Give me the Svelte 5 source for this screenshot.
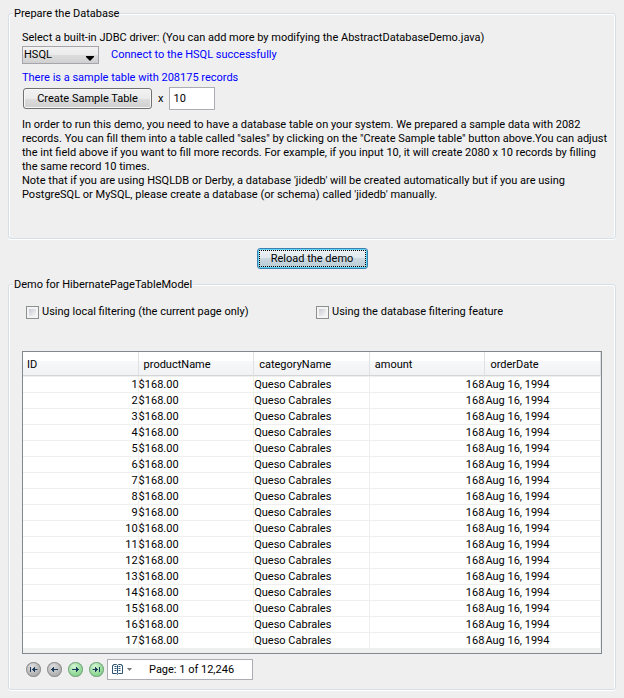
<script lang="ts">
  type SalesRecord = {
    id: number;
    productName: string;
    categoryName: string;
    amount: number;
    orderDate: string;
  };

  const PAGE_SIZE = 17;
  const PAGE_COUNT = 12246;

  const COLUMNS = ["ID", "productName", "categoryName", "amount", "orderDate"];

  let driver = $state("HSQL");
  let factor = $state("10");
  let localFilter = $state(false);
  let databaseFilter = $state(false);
  let page = $state(1);

  // Every sample record is the same one, only the id grows.
  const records: SalesRecord[] = $derived(
    Array.from({ length: PAGE_SIZE }, (_, i) => ({
      id: (page - 1) * PAGE_SIZE + i + 1,
      productName: "$168.00",
      categoryName: "Queso Cabrales",
      amount: 168,
      orderDate: "Aug 16, 1994",
    })),
  );

  const navButtons = $derived([
    { label: "First page", icon: "M4.5 5v5 M6 7.5h5.5 M8.5 5v5 M7.5 6v3", target: 1, disabled: page === 1 },
    { label: "Previous page", icon: "M4 7.5h7 M6.5 5v5 M5.5 6v3", target: page - 1, disabled: page === 1 },
    { label: "Next page", icon: "M4 7.5h7 M8.5 5v5 M9.5 6v3", target: page + 1, disabled: page === PAGE_COUNT },
    { label: "Last page", icon: "M10.5 5v5 M3.5 7.5H9 M6.5 5v5 M7.5 6v3", target: PAGE_COUNT, disabled: page === PAGE_COUNT },
  ]);
</script>

<main>
  <fieldset class="prepare">
    <legend>Prepare the Database</legend>
    <label for="driver">Select a built-in JDBC driver: (You can add more by modifying the AbstractDatabaseDemo.java)</label>
    <div class="driver-row">
      <span class="select-wrap">
        <select id="driver" bind:value={driver}>
          <option>HSQL</option>
          <option>Derby</option>
          <option>PostgreSQL</option>
          <option>MySQL</option>
        </select>
        <svg class="arrow" width="8" height="5" viewBox="0 0 8 5" aria-hidden="true"><path d="M0 0h8v1L4 5L0 1z" /></svg>
      </span>
      <span class="status">Connect to the HSQL successfully</span>
    </div>
    <p class="status">There is a sample table with 208175 records</p>
    <div class="create-row">
      <button type="button" class="push">Create Sample Table</button>
      <label for="factor">x</label>
      <input id="factor" type="text" bind:value={factor} />
    </div>
    <p>
      In order to run this demo, you need to have a database table on your system. We prepared a sample data with 2082<br />
      records. You can fill them into a table called "sales" by clicking on the "Create Sample table" button above.You can adjust<br />
      the int field above if you want to fill more records. For example, if you input 10, it will create 2080 x 10 records by filling<br />
      the same record 10 times.<br />
      Note that if you are using HSQLDB or Derby, a database 'jidedb' will be created automatically but if you are using<br />
      PostgreSQL or MySQL, please create a database (or schema) called 'jidedb' manually.
    </p>
  </fieldset>

  <div class="reload-row">
    <button type="button" class="push focused"><span>Reload the demo</span></button>
  </div>

  <fieldset class="demo">
    <legend>Demo for HibernatePageTableModel</legend>
    <div class="filters">
      <label><input type="checkbox" bind:checked={localFilter} />Using local filtering (the current page only)</label>
      <label><input type="checkbox" bind:checked={databaseFilter} />Using the database filtering feature</label>
    </div>

    <div class="table-pane">
      <table>
        <thead>
          <tr>
            {#each COLUMNS as column (column)}
              <th scope="col">{column}</th>
            {/each}
          </tr>
        </thead>
        <tbody>
          {#each records as r (r.id)}
            <tr>
              <td class="num">{r.id}</td>
              <td>{r.productName}</td>
              <td>{r.categoryName}</td>
              <td class="num">{r.amount}</td>
              <td>{r.orderDate}</td>
            </tr>
          {/each}
        </tbody>
      </table>
    </div>

    <div class="pager">
      {#each navButtons as nav (nav.label)}
        <button
          type="button"
          class="nav"
          aria-label={nav.label}
          disabled={nav.disabled}
          onclick={() => (page = nav.target)}
        >
          <svg width="15" height="15" viewBox="0 0 15 15" aria-hidden="true"><path d={nav.icon} /></svg>
        </button>
      {/each}
      <button type="button" class="page-box">
        <svg width="21" height="11" viewBox="0 0 21 11" aria-hidden="true">
          <path class="book" d="M.5 1.5h1V.5h3l1 1l1-1h3v1h1v8h-4l-1 1l-1-1h-4z M5.5 1.5v8" />
          <path class="book" d="M2.5 2.5h2 M2.5 4.5h2 M2.5 6.5h2 M6.5 2.5h2 M6.5 4.5h2 M6.5 6.5h2" />
          <path class="drop" d="M15 4h5l-2.5 3z" />
        </svg>
        <span>Page: {page} of {PAGE_COUNT.toLocaleString("en-US")}</span>
      </button>
    </div>
  </fieldset>
</main>

<style>
  :global(body) {
    margin: 0;
    background: #efefef;
  }
  main {
    padding: 6px 8px 8px;
    color: #000;
    font: 11px/14px Roboto, "DejaVu Sans Condensed", sans-serif;
  }
  p {
    margin: 0;
  }
  button,
  input,
  select {
    box-sizing: border-box;
    margin: 0;
    color: inherit;
    font: inherit;
  }
  fieldset {
    min-width: 0;
    margin: 0;
    border: 1px solid #d5dfe5;
    border-radius: 3px;
    box-shadow: inset 1px 1px 0 #fff, inset -1px 0 0 #fff, 0 1px 0 #fff;
  }
  legend {
    margin-left: -9px;
    padding: 1px 1px 0;
    background: #efefef;
    line-height: 13px;
  }
  .prepare {
    padding: 11px 2px 36px 13px;
  }
  .prepare > label {
    display: block;
  }
  .driver-row {
    display: flex;
    align-items: center;
    gap: 12px;
    margin: 1px 0 7px;
  }
  .select-wrap {
    position: relative;
    display: flex;
  }
  select {
    width: 77px;
    height: 18px;
    padding: 0 16px 0 1px;
    appearance: none;
    border: 1px solid #a5a5ab;
    border-radius: 0;
    background: linear-gradient(#f2f2f2, #ebebeb 50%, #dddddd 50%, #d0d0d0);
  }
  .arrow {
    position: absolute;
    right: 5px;
    bottom: 3px;
    pointer-events: none;
  }
  .status {
    color: #0000ff;
  }
  .create-row {
    display: flex;
    align-items: center;
    gap: 6px;
    margin: 2px 0 8px 1px;
  }
  .push {
    height: 21px;
    min-width: 111px;
    padding: 0 13px;
    border: 1px solid #707070;
    border-radius: 3px;
    background: linear-gradient(#f2f2f2, #ebebeb 50%, #dddddd 50%, #cfcfcf);
    box-shadow: inset 0 0 0 1px #f8f8f8;
  }
  .create-row .push {
    min-width: 129px;
  }
  .create-row input {
    width: 46px;
    height: 23px;
    padding: 0 3px;
    border: 1px solid #abadb3;
    background: #fff;
  }
  .reload-row {
    display: flex;
    justify-content: center;
    padding: 9px 0 8px;
  }
  .focused {
    padding: 1px;
    border-color: #3c7fb1;
    background: linear-gradient(#edf2f5, #dfe8ed 50%, #c9d7df 50%, #bccdd6);
    box-shadow: inset 0 0 0 1px #5fd3f3;
  }
  .focused span {
    display: block;
    padding: 1px 11px 0;
    border: 1px dotted #000;
  }
  .demo {
    padding: 14px 13px 9px;
  }
  .filters {
    display: grid;
    grid-template-columns: 1fr 1fr;
    column-gap: 4px;
    padding-left: 4px;
  }
  .filters label {
    display: flex;
    align-items: center;
    gap: 3px;
  }
  .filters input {
    width: 13px;
    height: 13px;
    appearance: none;
    border: 1px solid #8e8f8f;
    background: linear-gradient(135deg, #c8ccd4, #f6f6f6) content-box, #f4f4f4;
    padding: 2px;
  }
  .filters input:checked {
    background: #4b5f97 content-box;
  }
  .table-pane {
    margin-top: 32px;
    padding-bottom: 5px;
    border: 1px solid #828790;
  }
  table {
    width: 100%;
    table-layout: fixed;
    border-spacing: 0;
    background: #fff;
  }
  th {
    height: 24px;
    padding: 2px 4px 0;
    border-right: 1px solid #dfe1e4;
    border-bottom: 1px solid #d5d5d5;
    background: linear-gradient(#fff 40%, #f7f8fa 40%, #f1f2f4);
    box-sizing: border-box;
    font-weight: normal;
    text-align: left;
  }
  th + th {
    padding-left: 5px;
  }
  td {
    height: 15px;
    padding: 0;
    border-top: 1px solid #efefef;
    border-right: 1px solid #efefef;
    line-height: 15px;
  }
  .num {
    text-align: right;
  }
  .pager {
    display: flex;
    align-items: center;
    gap: 6px;
    margin-top: 5px;
    padding-left: 4px;
  }
  .nav {
    display: flex;
    width: 15px;
    height: 15px;
    padding: 0;
    border: 0;
    border-radius: 50%;
    background: radial-gradient(circle at 40% 30%, #d3f5d3, #8fd894 60%, #6fb877);
    box-shadow: inset 0 0 0 1px #7fa886;
  }
  .nav:disabled {
    background: radial-gradient(circle at 40% 30%, #dedede, #b4b4b4 60%, #989898);
    box-shadow: inset 0 0 0 1px #949494;
  }
  .nav path {
    fill: none;
    stroke: #1c3d5c;
  }
  .page-box {
    display: flex;
    align-items: center;
    gap: 16px;
    width: 146px;
    height: 21px;
    margin-left: -3px;
    padding: 0 4px;
    border: 1px solid #abadb3;
    background: #fff;
    white-space: nowrap;
  }
  .book {
    fill: none;
    stroke: #2c5475;
  }
  .drop {
    fill: #777;
  }
</style>
